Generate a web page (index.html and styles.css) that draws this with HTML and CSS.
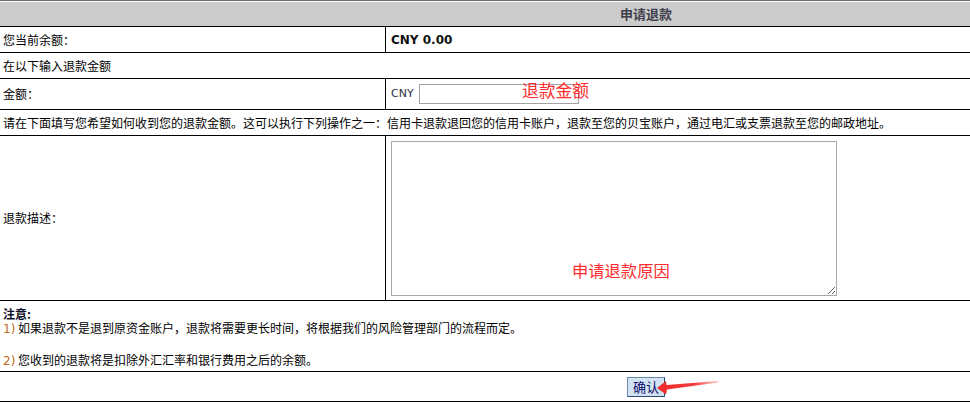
FILE: index.html
```html
<!DOCTYPE html>
<html lang="zh-CN">
<head>
<meta charset="utf-8">
<title>申请退款</title>
<link rel="stylesheet" href="styles.css">
</head>
<body>
<div class="form">
  <div class="head">申请退款</div>

  <div class="row two r1">
    <div class="cell">您当前余额：</div>
    <div class="cell val"><b class="amount">CNY 0.00</b></div>
  </div>

  <div class="row r2">
    <div class="cell">在以下输入退款金额</div>
  </div>

  <div class="row two r3">
    <div class="cell">金额：</div>
    <div class="cell val rel">
      <span class="cur">CNY</span><input class="money" type="text">
      <span class="note note-amount">退款金额</span>
    </div>
  </div>

  <div class="row r4">
    <div class="cell">请在下面填写您希望如何收到您的退款金额。这可以执行下列操作之一：信用卡退款退回您的信用卡账户，退款至您的贝宝账户，通过电汇或支票退款至您的邮政地址。</div>
  </div>

  <div class="row two r5">
    <div class="cell">退款描述：</div>
    <div class="cell val top rel">
      <textarea class="desc"></textarea>
      <span class="note note-reason">申请退款原因</span>
    </div>
  </div>

  <div class="row r6">
    <div class="notes">
      <div class="n-title">注意:</div>
      <div class="n-line"><span class="num">1)</span> 如果退款不是退到原资金账户，退款将需要更长时间，将根据我们的风险管理部门的流程而定。</div>
      <div class="n-gap"></div>
      <div class="n-line"><span class="num">2)</span> 您收到的退款将是扣除外汇汇率和银行费用之后的余额。</div>
    </div>
  </div>

  <div class="row r7 rel">
    <div class="btn-cell"><button class="btn" type="button">确认</button></div>
    <svg class="arrow" width="72" height="20" viewBox="0 0 72 20">
      <defs>
        <linearGradient id="fade" x1="0" y1="0" x2="1" y2="0">
          <stop offset="0" stop-color="#f22b2b"/>
          <stop offset="0.6" stop-color="#f23a3a"/>
          <stop offset="1" stop-color="#f55" stop-opacity="0.35"/>
        </linearGradient>
      </defs>
      <polygon points="7,11 16,4 16.5,8 68,4 68,5.5 17,12.5 16,17.5" fill="url(#fade)"/>
    </svg>
  </div>
</div>
</body>
</html>
```

FILE: styles.css
```css
html, body {
  margin: 0;
  padding: 0;
  background: #fff;
}

body {
  font-family: "Noto Sans CJK SC", "Liberation Sans", sans-serif;
  font-size: 12px;
  color: #000;
}

.form {
  width: 970px;
  border-top: 1px solid #6a6a6a;
  padding-top: 1px;
}

.head {
  height: 24px;
  line-height: 24px;
  background: #cccccc;
  border-bottom: 1px solid #000;
  padding-left: 322px;
  text-align: center;
  font-weight: bold;
  font-size: 13px;
  color: #3f3f4d;
}

.row {
  border-bottom: 1px solid #000;
  display: flex;
}

.row.two {
  display: grid;
  grid-template-columns: 385px 1fr;
}

.cell {
  display: flex;
  align-items: center;
  padding-left: 3px;
  line-height: 14px;
  white-space: nowrap;
}

.cell.val {
  border-left: 1px solid #000;
  padding-left: 5px;
}

.cell.top {
  align-items: flex-start;
}

.rel {
  position: relative;
}

.r1, .r2, .r4 { height: 25px; }
.r3 { height: 30px; }
.r5 { height: 164px; }
.r6 { height: 70px; }
.r7 { height: 29px; }

.amount {
  font-family: "DejaVu Sans", sans-serif;
  font-weight: bold;
  font-size: 12px;
  color: #111;
}

.cur {
  font-family: "DejaVu Sans", sans-serif;
  font-size: 11px;
  color: #2e2e4a;
}

.money {
  box-sizing: border-box;
  width: 160px;
  height: 20px;
  margin: 0 0 0 5px;
  padding: 0;
  border: 1px solid #a3a3a3;
  background: #fff;
  outline: none;
}

.note {
  position: absolute;
  color: #ff2d2d;
  line-height: 1;
  white-space: nowrap;
}

.note-amount {
  left: 136px;
  top: 3px;
  font-size: 16.75px;
}

.note-reason {
  left: 186px;
  top: 126px;
  font-size: 16.3px;
}

.desc {
  box-sizing: border-box;
  width: 446px;
  height: 155px;
  margin: 5px 0 0 0;
  padding: 2px;
  border: 1px solid #a9a9a9;
  background: #fff;
  font: inherit;
  outline: none;
}

.notes {
  padding: 6px 3px 0 3px;
  white-space: nowrap;
}

.n-title {
  line-height: 13px;
  font-weight: bold;
  color: #10102a;
}

.n-line {
  line-height: 15px;
}

.n-gap {
  height: 15px;
}

.num {
  font-family: "DejaVu Sans", sans-serif;
  color: #c06a1c;
}

.btn-cell {
  flex: 1;
  padding: 5px 0 0 322px;
  text-align: center;
}

.btn {
  box-sizing: border-box;
  width: 38px;
  height: 20px;
  margin: 0;
  padding: 0;
  border: 1px solid #2c4d7c;
  border-top-color: #6a8ab2;
  border-left-color: #6a8ab2;
  background: #d3e2f1;
  color: #0a0a6a;
  font-family: "Noto Sans CJK SC", sans-serif;
  font-size: 13px;
  line-height: 18px;
}

.arrow {
  position: absolute;
  left: 650px;
  top: 5px;
}
```
